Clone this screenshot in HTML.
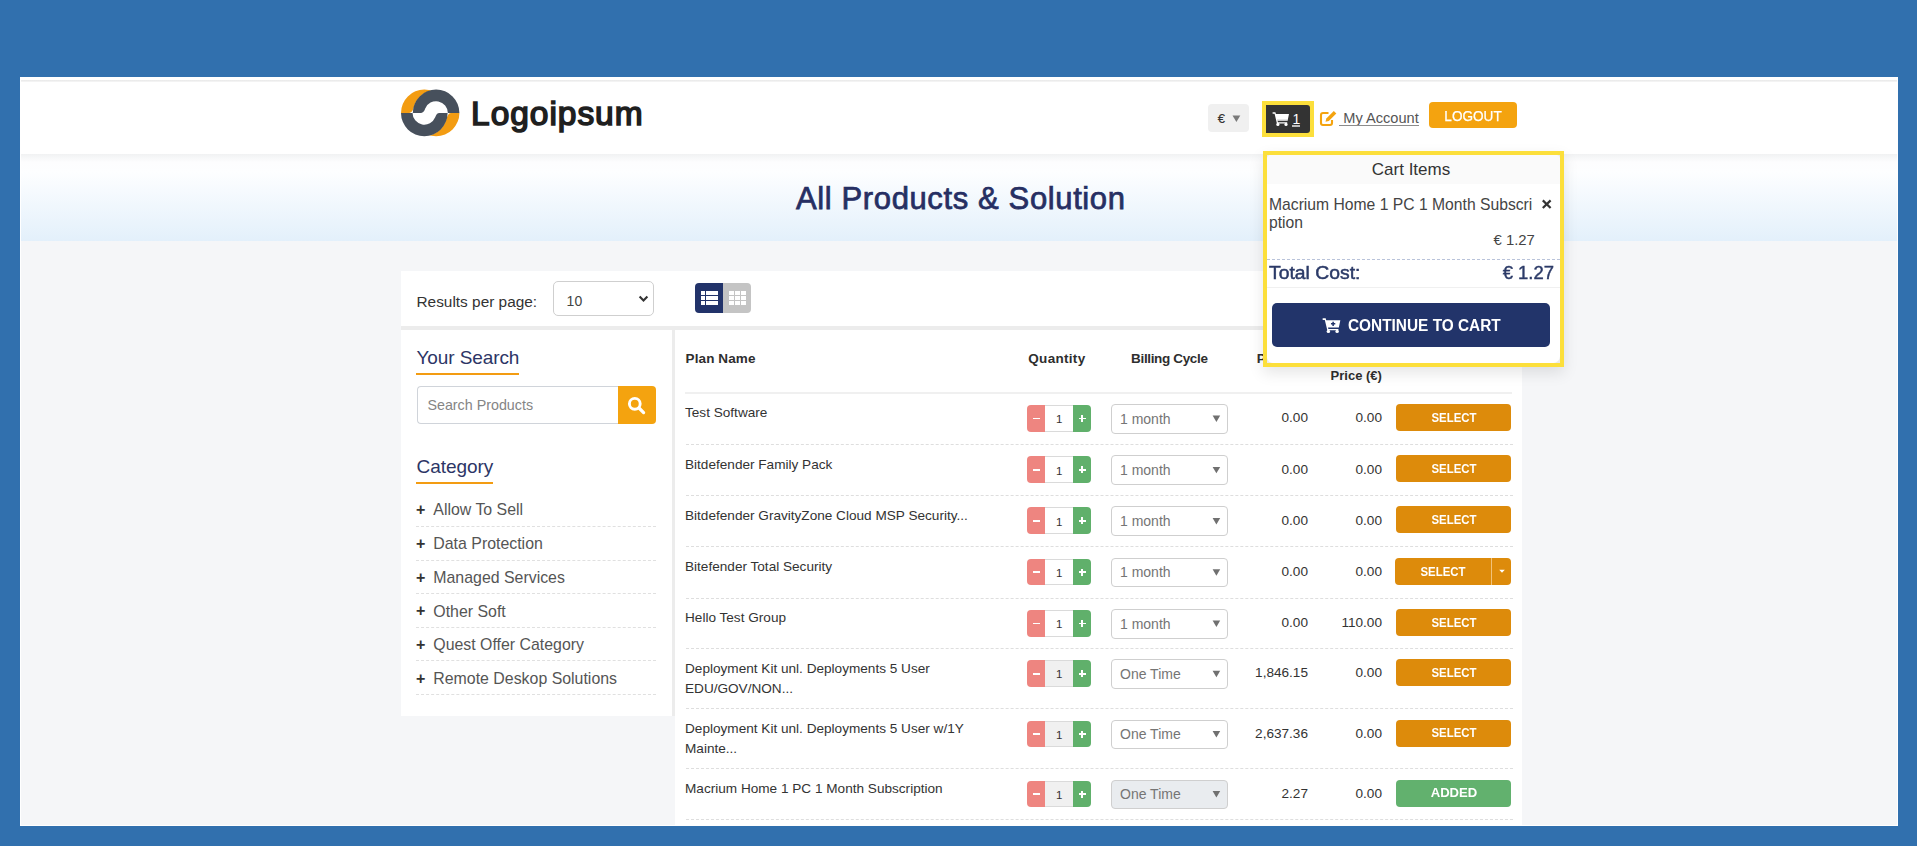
<!DOCTYPE html>
<html><head><meta charset="utf-8">
<style>
*{box-sizing:border-box;margin:0;padding:0}
html,body{width:1917px;height:846px;overflow:hidden;background:#3170ae;font-family:"Liberation Sans",sans-serif;position:relative}
.abs{position:absolute}
.t{position:absolute;white-space:nowrap;line-height:1}
svg{position:absolute;overflow:visible}
</style></head><body>

<div class="abs" style="left:20px;top:77px;width:1878px;height:749px;background:#f5f6f8;border:1px solid #fff"></div>
<div class="abs" style="left:21px;top:77px;width:1876px;height:77px;background:#fff;"></div>
<div class="abs" style="left:21px;top:80px;width:1876px;height:2px;background:linear-gradient(#e8e8e8,#f7f7f7);"></div>
<div class="abs" style="left:21px;top:154px;width:1876px;height:87px;background:linear-gradient(#f1f2f3 0px,#fdfdfe 8px,#fdfeff 18px,#e3f0fb 87px);"></div>
<svg style="left:0;top:0" width="1917" height="846" viewBox="0 0 1917 846"><defs><mask id="mR"><rect x="380" y="80" width="100" height="70" fill="#fff"/><circle cx="436.1" cy="112.9" r="23.0" fill="#000"/></mask><mask id="mL"><rect x="380" y="80" width="100" height="70" fill="#fff"/><circle cx="424.3" cy="112.9" r="23.0" fill="#000"/></mask></defs><path d="M401.0,112.9 A23.3,23.3 0 0 1 447.6,112.9 L436.05,112.9 A11.75,11.75 0 0 0 413.41,108.50 Q411.95,112.9 409.35,112.9 Z" fill="#f39c12" mask="url(#mR)"/><path d="M412.8,112.9 A23.3,23.3 0 0 1 459.40000000000003,112.9 L447.85,112.9 A11.75,11.75 0 0 0 425.21,108.50 Q423.75,112.9 421.15,112.9 Z" fill="#47505c"/><path d="M459.40000000000003,112.9 A23.3,23.3 0 0 1 412.8,112.9 L424.35,112.9 A11.75,11.75 0 0 0 446.99,117.30 Q448.45,112.9 451.05,112.9 Z" fill="#f39c12" mask="url(#mL)"/><path d="M447.6,112.9 A23.3,23.3 0 0 1 401.0,112.9 L412.55,112.9 A11.75,11.75 0 0 0 435.19,117.30 Q436.65,112.9 439.25,112.9 Z" fill="#47505c"/></svg>
<div class="t" style="left:471.10px;top:97.24px;font-size:33.5px;color:#1f1f1f;font-weight:normal;letter-spacing:0.95px;-webkit-text-stroke:1.6px #1f1f1f;">Logoipsum</div>
<div class="abs" style="left:1208px;top:104px;width:41px;height:28px;background:#f0f0f0;border-radius:4px"></div>
<div class="t" style="left:1217.80px;top:112.30px;font-size:13px;color:#333;font-weight:normal;-webkit-text-stroke:0.2px #333;">€</div>
<svg style="left:0;top:0" width="1917" height="846"><polygon points="1232.5,115.5 1240.3,115.5 1236.4,122" fill="#7a7a7a"/></svg>
<div class="abs" style="left:1262px;top:101px;width:52px;height:36px;background:#fcdf3b;"></div>
<div class="abs" style="left:1266px;top:105px;width:44px;height:27.5px;background:#333;border-radius:0 3px 3px 0"></div>
<svg style="left:1272.3px;top:112px" width="17.0" height="14.0" viewBox="0 0 17 14"><path d="M0.6,0.2 H3.4 L3.9,2 H17 L15.6,8.7 H5.6 L5.9,10.2 H15.2 V11.4 H4.9 L2.6,1.8 H0.6 Z" fill="#fff"/><circle cx="5.9" cy="12.4" r="1.6" fill="#fff"/><circle cx="14" cy="12.4" r="1.6" fill="#fff"/><rect x="5" y="7.6" width="10.5" height="0.8" fill="#bbb"/></svg>
<div class="t" style="left:1292.50px;top:112.35px;font-size:14px;color:#fff;font-weight:normal;">1</div>
<div class="abs" style="left:1292px;top:125.2px;width:8px;height:1.7999999999999972px;background:#bdbdbd;"></div>
<svg style="left:1318px;top:109px" width="20" height="18" viewBox="0 0 20 18"><path d="M10.5,4 H5 Q3,4 3,6 V14 Q3,16 5,16 H12 Q14,16 14,14 V11" fill="none" stroke="#f4a30f" stroke-width="2.1"/><path d="M7.5,12.8 L8.3,9.6 L15.8,2.1 L18.3,4.6 L10.8,12.1 Z" fill="#f4a30f"/></svg>
<div class="t" style="left:1343.30px;top:110.64px;font-size:14.6px;color:#555;font-weight:normal;">My Account</div>
<div class="abs" style="left:1339px;top:124.6px;width:80px;height:1.2000000000000028px;background:#8c8c8c;"></div>
<div class="abs" style="left:1429px;top:101.5px;width:88px;height:26.69999999999999px;background:#f4a30f;border-radius:4px"></div>
<div class="t" style="left:1422.80px;width:100px;text-align:center;top:108.50px;font-size:14.3px;color:#fff;font-weight:normal;-webkit-text-stroke:0.25px #fff;transform:scaleX(0.95);transform-origin:center top;">LOGOUT</div>
<div class="t" style="left:710.80px;width:500px;text-align:center;top:182.66px;font-size:31px;color:#262f63;font-weight:normal;letter-spacing:0.62px;-webkit-text-stroke:0.75px #262f63;">All Products &amp; Solution</div>
<div class="abs" style="left:401px;top:271px;width:1121px;height:55px;background:#fff;"></div>
<div class="abs" style="left:401px;top:326px;width:1121px;height:4px;background:#ececec;"></div>
<div class="t" style="left:416.50px;top:293.66px;font-size:15.4px;color:#333;font-weight:normal;">Results per page:</div>
<div class="abs" style="left:553px;top:281px;width:101px;height:35px;background:#fff;border:1px solid #cfcfcf;border-radius:5px"></div>
<div class="t" style="left:566.60px;top:294.35px;font-size:14px;color:#444;font-weight:normal;">10</div>
<svg style="left:0;top:0" width="1917" height="846"><polyline points="639.6,296.6 643.5,300.6 647.4,296.6" fill="none" stroke="#333" stroke-width="2.1"/></svg>
<div class="abs" style="left:695px;top:283px;width:28px;height:30px;background:#22336a;border-radius:4px 0 0 4px"></div>
<div class="abs" style="left:723px;top:283px;width:28px;height:30px;background:#c4c4c4;border-radius:0 4px 4px 0"></div>
<div class="abs" style="left:701px;top:291px;width:3.5px;height:4px;background:#fff;"></div>
<div class="abs" style="left:705.5px;top:291px;width:12.0px;height:4px;background:#fff;"></div>
<div class="abs" style="left:728.5px;top:291px;width:5.0px;height:4px;background:#fff;"></div>
<div class="abs" style="left:734.5px;top:291px;width:5.0px;height:4px;background:#fff;"></div>
<div class="abs" style="left:740.5px;top:291px;width:5.0px;height:4px;background:#fff;"></div>
<div class="abs" style="left:701px;top:296px;width:3.5px;height:4px;background:#fff;"></div>
<div class="abs" style="left:705.5px;top:296px;width:12.0px;height:4px;background:#fff;"></div>
<div class="abs" style="left:728.5px;top:296px;width:5.0px;height:4px;background:#fff;"></div>
<div class="abs" style="left:734.5px;top:296px;width:5.0px;height:4px;background:#fff;"></div>
<div class="abs" style="left:740.5px;top:296px;width:5.0px;height:4px;background:#fff;"></div>
<div class="abs" style="left:701px;top:301px;width:3.5px;height:4px;background:#fff;"></div>
<div class="abs" style="left:705.5px;top:301px;width:12.0px;height:4px;background:#fff;"></div>
<div class="abs" style="left:728.5px;top:301px;width:5.0px;height:4px;background:#fff;"></div>
<div class="abs" style="left:734.5px;top:301px;width:5.0px;height:4px;background:#fff;"></div>
<div class="abs" style="left:740.5px;top:301px;width:5.0px;height:4px;background:#fff;"></div>
<div class="abs" style="left:401px;top:330px;width:271px;height:386px;background:#fff;"></div>
<div class="abs" style="left:672px;top:330px;width:3px;height:386px;background:#ececec;"></div>
<div class="t" style="left:416.50px;top:348.12px;font-size:19px;color:#2c3565;font-weight:normal;letter-spacing:-0.1px;">Your Search</div>
<div class="abs" style="left:416px;top:373.3px;width:103px;height:2.0px;background:#f39c12;"></div>
<div class="abs" style="left:416.5px;top:386px;width:202.5px;height:38px;background:#fff;border:1px solid #d0d4da;border-right:none;border-radius:4px 0 0 4px"></div>
<div class="t" style="left:427.40px;top:398.10px;font-size:14.3px;color:#858585;font-weight:normal;">Search Products</div>
<div class="abs" style="left:618px;top:386px;width:38px;height:38px;background:#f4a30f;border-radius:0 4px 4px 0"></div>
<svg style="left:0;top:0" width="1917" height="846"><circle cx="634.8" cy="403.8" r="5.4" fill="none" stroke="#fff" stroke-width="2.9"/><line x1="639" y1="408" x2="643.6" y2="412.6" stroke="#fff" stroke-width="3.2" stroke-linecap="round"/></svg>
<div class="t" style="left:416.60px;top:456.52px;font-size:19px;color:#2c3565;font-weight:normal;letter-spacing:-0.05px;">Category</div>
<div class="abs" style="left:416px;top:482.2px;width:77px;height:2.0px;background:#f39c12;"></div>
<div class="t" style="left:416.00px;top:502.06px;font-size:16px;color:#333;font-weight:bold;">+</div>
<div class="t" style="left:433.30px;top:502.14px;font-size:15.9px;color:#555;font-weight:normal;">Allow To Sell</div>
<div class="abs" style="left:416px;top:526.0px;width:240px;height:1.0px;background:transparent;border-top:1px dashed #e0e0e0"></div>
<div class="t" style="left:416.00px;top:536.16px;font-size:16px;color:#333;font-weight:bold;">+</div>
<div class="t" style="left:433.30px;top:536.24px;font-size:15.9px;color:#555;font-weight:normal;">Data Protection</div>
<div class="abs" style="left:416px;top:559.5px;width:240px;height:1.0px;background:transparent;border-top:1px dashed #e0e0e0"></div>
<div class="t" style="left:416.00px;top:570.26px;font-size:16px;color:#333;font-weight:bold;">+</div>
<div class="t" style="left:433.30px;top:570.34px;font-size:15.9px;color:#555;font-weight:normal;">Managed Services</div>
<div class="abs" style="left:416px;top:593.0px;width:240px;height:1.0px;background:transparent;border-top:1px dashed #e0e0e0"></div>
<div class="t" style="left:416.00px;top:603.46px;font-size:16px;color:#333;font-weight:bold;">+</div>
<div class="t" style="left:433.30px;top:603.54px;font-size:15.9px;color:#555;font-weight:normal;">Other Soft</div>
<div class="abs" style="left:416px;top:626.5px;width:240px;height:1.0px;background:transparent;border-top:1px dashed #e0e0e0"></div>
<div class="t" style="left:416.00px;top:637.26px;font-size:16px;color:#333;font-weight:bold;">+</div>
<div class="t" style="left:433.30px;top:637.34px;font-size:15.9px;color:#555;font-weight:normal;">Quest Offer Category</div>
<div class="abs" style="left:416px;top:660.0px;width:240px;height:1.0px;background:transparent;border-top:1px dashed #e0e0e0"></div>
<div class="t" style="left:416.00px;top:670.56px;font-size:16px;color:#333;font-weight:bold;">+</div>
<div class="t" style="left:433.30px;top:670.64px;font-size:15.9px;color:#555;font-weight:normal;">Remote Deskop Solutions</div>
<div class="abs" style="left:416px;top:693.5px;width:240px;height:1.0px;background:transparent;border-top:1px dashed #e0e0e0"></div>
<div class="abs" style="left:675px;top:330px;width:847px;height:496px;background:#fff;"></div>
<div class="t" style="left:685.60px;top:352.17px;font-size:13.5px;color:#2e2e2e;font-weight:bold;letter-spacing:0.1px;">Plan Name</div>
<div class="t" style="left:1028.30px;top:352.17px;font-size:13.5px;color:#2e2e2e;font-weight:bold;letter-spacing:0.3px;">Quantity</div>
<div class="t" style="left:1131.10px;top:352.17px;font-size:13.5px;color:#2e2e2e;font-weight:bold;letter-spacing:-0.35px;">Billing Cycle</div>
<div class="t" style="left:1256.70px;top:351.87px;font-size:13.5px;color:#2e2e2e;font-weight:bold;">P</div>
<div class="t" style="left:1261.90px;width:120px;text-align:right;top:368.70px;font-size:13px;color:#2e2e2e;font-weight:bold;">Price (€)</div>
<div class="abs" style="left:685px;top:392.3px;width:827px;height:1.6999999999999886px;background:#f0f0f0;"></div>
<div class="t" style="left:685.00px;top:406.49px;font-size:13.6px;color:#333;font-weight:normal;">Test Software</div>
<div class="abs" style="left:1027px;top:405px;width:18px;height:26.5px;background:#ee8580;border-radius:4px 0 0 4px"></div>
<div class="abs" style="left:1045px;top:405px;width:28px;height:26.5px;background:#fff;border-top:1px solid #dadada;border-bottom:1px solid #dadada"></div>
<div class="abs" style="left:1073px;top:405px;width:18px;height:26.5px;background:#60b06b;border-radius:0 4px 4px 0"></div>
<div class="abs" style="left:1032.5px;top:417.6px;width:7.0px;height:1.7999999999999545px;background:#fff;"></div>
<div class="abs" style="left:1078.5px;top:417.6px;width:7.0px;height:1.7999999999999545px;background:#fff;"></div>
<div class="abs" style="left:1081.1px;top:415px;width:1.800000000000182px;height:7px;background:#fff;"></div>
<div class="t" style="left:1049.30px;width:20px;text-align:center;top:414.27px;font-size:11.5px;color:#333;font-weight:normal;">1</div>
<div class="abs" style="left:1111px;top:404px;width:116.5px;height:29.5px;background:#fff;border:1px solid #cfcfcf;border-radius:4px"></div>
<div class="t" style="left:1120.00px;top:411.75px;font-size:14px;color:#757575;font-weight:normal;">1 month</div>
<svg style="left:0;top:0" width="1917" height="846"><polygon points="1212.6,415.6 1220.2,415.6 1216.4,422" fill="#707070"/></svg>
<div class="t" style="left:1208.00px;width:100px;text-align:right;top:411.29px;font-size:13.6px;color:#333;font-weight:normal;">0.00</div>
<div class="t" style="left:1282.00px;width:100px;text-align:right;top:411.29px;font-size:13.6px;color:#333;font-weight:normal;">0.00</div>
<div class="abs" style="left:1396px;top:404px;width:115px;height:27px;background:#dd8b0b;border-radius:4px"></div>
<div class="t" style="left:1403.50px;width:100px;text-align:center;top:411.80px;font-size:12.4px;color:#fff;font-weight:bold;transform:scaleX(0.92);transform-origin:center top;">SELECT</div>
<div class="abs" style="left:686px;top:443.8px;width:827px;height:1.0px;background:transparent;border-top:1px dashed #dedede"></div>
<div class="t" style="left:685.00px;top:457.79px;font-size:13.6px;color:#333;font-weight:normal;">Bitdefender Family Pack</div>
<div class="abs" style="left:1027px;top:456.3px;width:18px;height:26.5px;background:#ee8580;border-radius:4px 0 0 4px"></div>
<div class="abs" style="left:1045px;top:456.3px;width:28px;height:26.5px;background:#fff;border-top:1px solid #dadada;border-bottom:1px solid #dadada"></div>
<div class="abs" style="left:1073px;top:456.3px;width:18px;height:26.5px;background:#60b06b;border-radius:0 4px 4px 0"></div>
<div class="abs" style="left:1032.5px;top:468.90000000000003px;width:7.0px;height:1.7999999999999545px;background:#fff;"></div>
<div class="abs" style="left:1078.5px;top:468.90000000000003px;width:7.0px;height:1.7999999999999545px;background:#fff;"></div>
<div class="abs" style="left:1081.1px;top:466.3px;width:1.800000000000182px;height:7.0px;background:#fff;"></div>
<div class="t" style="left:1049.30px;width:20px;text-align:center;top:465.57px;font-size:11.5px;color:#333;font-weight:normal;">1</div>
<div class="abs" style="left:1111px;top:455.3px;width:116.5px;height:29.5px;background:#fff;border:1px solid #cfcfcf;border-radius:4px"></div>
<div class="t" style="left:1120.00px;top:463.05px;font-size:14px;color:#757575;font-weight:normal;">1 month</div>
<svg style="left:0;top:0" width="1917" height="846"><polygon points="1212.6,466.90000000000003 1220.2,466.90000000000003 1216.4,473.3" fill="#707070"/></svg>
<div class="t" style="left:1208.00px;width:100px;text-align:right;top:462.59px;font-size:13.6px;color:#333;font-weight:normal;">0.00</div>
<div class="t" style="left:1282.00px;width:100px;text-align:right;top:462.59px;font-size:13.6px;color:#333;font-weight:normal;">0.00</div>
<div class="abs" style="left:1396px;top:455.3px;width:115px;height:27.0px;background:#dd8b0b;border-radius:4px"></div>
<div class="t" style="left:1403.50px;width:100px;text-align:center;top:463.10px;font-size:12.4px;color:#fff;font-weight:bold;transform:scaleX(0.92);transform-origin:center top;">SELECT</div>
<div class="abs" style="left:686px;top:494.9px;width:827px;height:1.0px;background:transparent;border-top:1px dashed #dedede"></div>
<div class="t" style="left:685.00px;top:508.89px;font-size:13.6px;color:#333;font-weight:normal;">Bitdefender GravityZone Cloud MSP Security...</div>
<div class="abs" style="left:1027px;top:507.4px;width:18px;height:26.5px;background:#ee8580;border-radius:4px 0 0 4px"></div>
<div class="abs" style="left:1045px;top:507.4px;width:28px;height:26.5px;background:#fff;border-top:1px solid #dadada;border-bottom:1px solid #dadada"></div>
<div class="abs" style="left:1073px;top:507.4px;width:18px;height:26.5px;background:#60b06b;border-radius:0 4px 4px 0"></div>
<div class="abs" style="left:1032.5px;top:520.0px;width:7.0px;height:1.7999999999999545px;background:#fff;"></div>
<div class="abs" style="left:1078.5px;top:520.0px;width:7.0px;height:1.7999999999999545px;background:#fff;"></div>
<div class="abs" style="left:1081.1px;top:517.4px;width:1.800000000000182px;height:7.0px;background:#fff;"></div>
<div class="t" style="left:1049.30px;width:20px;text-align:center;top:516.67px;font-size:11.5px;color:#333;font-weight:normal;">1</div>
<div class="abs" style="left:1111px;top:506.4px;width:116.5px;height:29.5px;background:#fff;border:1px solid #cfcfcf;border-radius:4px"></div>
<div class="t" style="left:1120.00px;top:514.15px;font-size:14px;color:#757575;font-weight:normal;">1 month</div>
<svg style="left:0;top:0" width="1917" height="846"><polygon points="1212.6,518.0 1220.2,518.0 1216.4,524.4" fill="#707070"/></svg>
<div class="t" style="left:1208.00px;width:100px;text-align:right;top:513.69px;font-size:13.6px;color:#333;font-weight:normal;">0.00</div>
<div class="t" style="left:1282.00px;width:100px;text-align:right;top:513.69px;font-size:13.6px;color:#333;font-weight:normal;">0.00</div>
<div class="abs" style="left:1396px;top:506.4px;width:115px;height:27.0px;background:#dd8b0b;border-radius:4px"></div>
<div class="t" style="left:1403.50px;width:100px;text-align:center;top:514.20px;font-size:12.4px;color:#fff;font-weight:bold;transform:scaleX(0.92);transform-origin:center top;">SELECT</div>
<div class="abs" style="left:686px;top:546.2px;width:827px;height:1.0px;background:transparent;border-top:1px dashed #dedede"></div>
<div class="t" style="left:685.00px;top:560.19px;font-size:13.6px;color:#333;font-weight:normal;">Bitefender Total Security</div>
<div class="abs" style="left:1027px;top:558.7px;width:18px;height:26.5px;background:#ee8580;border-radius:4px 0 0 4px"></div>
<div class="abs" style="left:1045px;top:558.7px;width:28px;height:26.5px;background:#fff;border-top:1px solid #dadada;border-bottom:1px solid #dadada"></div>
<div class="abs" style="left:1073px;top:558.7px;width:18px;height:26.5px;background:#60b06b;border-radius:0 4px 4px 0"></div>
<div class="abs" style="left:1032.5px;top:571.3000000000001px;width:7.0px;height:1.7999999999999545px;background:#fff;"></div>
<div class="abs" style="left:1078.5px;top:571.3000000000001px;width:7.0px;height:1.7999999999999545px;background:#fff;"></div>
<div class="abs" style="left:1081.1px;top:568.7px;width:1.800000000000182px;height:7.0px;background:#fff;"></div>
<div class="t" style="left:1049.30px;width:20px;text-align:center;top:567.97px;font-size:11.5px;color:#333;font-weight:normal;">1</div>
<div class="abs" style="left:1111px;top:557.7px;width:116.5px;height:29.5px;background:#fff;border:1px solid #cfcfcf;border-radius:4px"></div>
<div class="t" style="left:1120.00px;top:565.45px;font-size:14px;color:#757575;font-weight:normal;">1 month</div>
<svg style="left:0;top:0" width="1917" height="846"><polygon points="1212.6,569.3000000000001 1220.2,569.3000000000001 1216.4,575.7" fill="#707070"/></svg>
<div class="t" style="left:1208.00px;width:100px;text-align:right;top:564.99px;font-size:13.6px;color:#333;font-weight:normal;">0.00</div>
<div class="t" style="left:1282.00px;width:100px;text-align:right;top:564.99px;font-size:13.6px;color:#333;font-weight:normal;">0.00</div>
<div class="abs" style="left:1395px;top:557.7px;width:116px;height:27.0px;background:#dd8b0b;border-radius:4px"></div>
<div class="abs" style="left:1491px;top:557.7px;width:1px;height:27.0px;background:#f2c27a;"></div>
<div class="t" style="left:1393.40px;width:100px;text-align:center;top:565.50px;font-size:12.4px;color:#fff;font-weight:bold;transform:scaleX(0.92);transform-origin:center top;">SELECT</div>
<svg style="left:0;top:0" width="1917" height="846"><polygon points="1499.2,569.7 1504.8,569.7 1502,572.7" fill="#fff"/></svg>
<div class="abs" style="left:686px;top:597.5px;width:827px;height:1.0px;background:transparent;border-top:1px dashed #dedede"></div>
<div class="t" style="left:685.00px;top:611.49px;font-size:13.6px;color:#333;font-weight:normal;">Hello Test Group</div>
<div class="abs" style="left:1027px;top:610px;width:18px;height:26.5px;background:#ee8580;border-radius:4px 0 0 4px"></div>
<div class="abs" style="left:1045px;top:610px;width:28px;height:26.5px;background:#fff;border-top:1px solid #dadada;border-bottom:1px solid #dadada"></div>
<div class="abs" style="left:1073px;top:610px;width:18px;height:26.5px;background:#60b06b;border-radius:0 4px 4px 0"></div>
<div class="abs" style="left:1032.5px;top:622.6px;width:7.0px;height:1.7999999999999545px;background:#fff;"></div>
<div class="abs" style="left:1078.5px;top:622.6px;width:7.0px;height:1.7999999999999545px;background:#fff;"></div>
<div class="abs" style="left:1081.1px;top:620px;width:1.800000000000182px;height:7px;background:#fff;"></div>
<div class="t" style="left:1049.30px;width:20px;text-align:center;top:619.27px;font-size:11.5px;color:#333;font-weight:normal;">1</div>
<div class="abs" style="left:1111px;top:609px;width:116.5px;height:29.5px;background:#fff;border:1px solid #cfcfcf;border-radius:4px"></div>
<div class="t" style="left:1120.00px;top:616.75px;font-size:14px;color:#757575;font-weight:normal;">1 month</div>
<svg style="left:0;top:0" width="1917" height="846"><polygon points="1212.6,620.6 1220.2,620.6 1216.4,627" fill="#707070"/></svg>
<div class="t" style="left:1208.00px;width:100px;text-align:right;top:616.29px;font-size:13.6px;color:#333;font-weight:normal;">0.00</div>
<div class="t" style="left:1282.00px;width:100px;text-align:right;top:616.29px;font-size:13.6px;color:#333;font-weight:normal;">110.00</div>
<div class="abs" style="left:1396px;top:609px;width:115px;height:27px;background:#dd8b0b;border-radius:4px"></div>
<div class="t" style="left:1403.50px;width:100px;text-align:center;top:616.80px;font-size:12.4px;color:#fff;font-weight:bold;transform:scaleX(0.92);transform-origin:center top;">SELECT</div>
<div class="abs" style="left:686px;top:647.7px;width:827px;height:1.0px;background:transparent;border-top:1px dashed #dedede"></div>
<div class="t" style="left:685.00px;top:661.69px;font-size:13.6px;color:#333;font-weight:normal;">Deployment Kit unl. Deployments 5 User</div>
<div class="t" style="left:685.00px;top:681.69px;font-size:13.6px;color:#333;font-weight:normal;">EDU/GOV/NON...</div>
<div class="abs" style="left:1027px;top:660.2px;width:18px;height:26.5px;background:#ee8580;border-radius:4px 0 0 4px"></div>
<div class="abs" style="left:1045px;top:660.2px;width:28px;height:26.5px;background:#f0f0f0;border-top:1px solid #dadada;border-bottom:1px solid #dadada"></div>
<div class="abs" style="left:1073px;top:660.2px;width:18px;height:26.5px;background:#60b06b;border-radius:0 4px 4px 0"></div>
<div class="abs" style="left:1032.5px;top:672.8000000000001px;width:7.0px;height:1.7999999999999545px;background:#fff;"></div>
<div class="abs" style="left:1078.5px;top:672.8000000000001px;width:7.0px;height:1.7999999999999545px;background:#fff;"></div>
<div class="abs" style="left:1081.1px;top:670.2px;width:1.800000000000182px;height:7.0px;background:#fff;"></div>
<div class="t" style="left:1049.30px;width:20px;text-align:center;top:669.47px;font-size:11.5px;color:#333;font-weight:normal;">1</div>
<div class="abs" style="left:1111px;top:659.2px;width:116.5px;height:29.5px;background:#fff;border:1px solid #cfcfcf;border-radius:4px"></div>
<div class="t" style="left:1120.00px;top:666.95px;font-size:14px;color:#757575;font-weight:normal;">One Time</div>
<svg style="left:0;top:0" width="1917" height="846"><polygon points="1212.6,670.8000000000001 1220.2,670.8000000000001 1216.4,677.2" fill="#707070"/></svg>
<div class="t" style="left:1208.00px;width:100px;text-align:right;top:666.49px;font-size:13.6px;color:#333;font-weight:normal;">1,846.15</div>
<div class="t" style="left:1282.00px;width:100px;text-align:right;top:666.49px;font-size:13.6px;color:#333;font-weight:normal;">0.00</div>
<div class="abs" style="left:1396px;top:659.2px;width:115px;height:27.0px;background:#dd8b0b;border-radius:4px"></div>
<div class="t" style="left:1403.50px;width:100px;text-align:center;top:667.00px;font-size:12.4px;color:#fff;font-weight:bold;transform:scaleX(0.92);transform-origin:center top;">SELECT</div>
<div class="abs" style="left:686px;top:708.0px;width:827px;height:1.0px;background:transparent;border-top:1px dashed #dedede"></div>
<div class="t" style="left:685.00px;top:721.99px;font-size:13.6px;color:#333;font-weight:normal;">Deployment Kit unl. Deployments 5 User w/1Y</div>
<div class="t" style="left:685.00px;top:741.99px;font-size:13.6px;color:#333;font-weight:normal;">Mainte...</div>
<div class="abs" style="left:1027px;top:720.5px;width:18px;height:26.5px;background:#ee8580;border-radius:4px 0 0 4px"></div>
<div class="abs" style="left:1045px;top:720.5px;width:28px;height:26.5px;background:#f0f0f0;border-top:1px solid #dadada;border-bottom:1px solid #dadada"></div>
<div class="abs" style="left:1073px;top:720.5px;width:18px;height:26.5px;background:#60b06b;border-radius:0 4px 4px 0"></div>
<div class="abs" style="left:1032.5px;top:733.1px;width:7.0px;height:1.7999999999999545px;background:#fff;"></div>
<div class="abs" style="left:1078.5px;top:733.1px;width:7.0px;height:1.7999999999999545px;background:#fff;"></div>
<div class="abs" style="left:1081.1px;top:730.5px;width:1.800000000000182px;height:7.0px;background:#fff;"></div>
<div class="t" style="left:1049.30px;width:20px;text-align:center;top:729.77px;font-size:11.5px;color:#333;font-weight:normal;">1</div>
<div class="abs" style="left:1111px;top:719.5px;width:116.5px;height:29.5px;background:#fff;border:1px solid #cfcfcf;border-radius:4px"></div>
<div class="t" style="left:1120.00px;top:727.25px;font-size:14px;color:#757575;font-weight:normal;">One Time</div>
<svg style="left:0;top:0" width="1917" height="846"><polygon points="1212.6,731.1 1220.2,731.1 1216.4,737.5" fill="#707070"/></svg>
<div class="t" style="left:1208.00px;width:100px;text-align:right;top:726.79px;font-size:13.6px;color:#333;font-weight:normal;">2,637.36</div>
<div class="t" style="left:1282.00px;width:100px;text-align:right;top:726.79px;font-size:13.6px;color:#333;font-weight:normal;">0.00</div>
<div class="abs" style="left:1396px;top:719.5px;width:115px;height:27.0px;background:#dd8b0b;border-radius:4px"></div>
<div class="t" style="left:1403.50px;width:100px;text-align:center;top:727.30px;font-size:12.4px;color:#fff;font-weight:bold;transform:scaleX(0.92);transform-origin:center top;">SELECT</div>
<div class="abs" style="left:686px;top:768.0px;width:827px;height:1.0px;background:transparent;border-top:1px dashed #dedede"></div>
<div class="t" style="left:685.00px;top:781.99px;font-size:13.6px;color:#333;font-weight:normal;">Macrium Home 1 PC 1 Month Subscription</div>
<div class="abs" style="left:1027px;top:780.5px;width:18px;height:26.5px;background:#ee8580;border-radius:4px 0 0 4px"></div>
<div class="abs" style="left:1045px;top:780.5px;width:28px;height:26.5px;background:#f0f0f0;border-top:1px solid #dadada;border-bottom:1px solid #dadada"></div>
<div class="abs" style="left:1073px;top:780.5px;width:18px;height:26.5px;background:#60b06b;border-radius:0 4px 4px 0"></div>
<div class="abs" style="left:1032.5px;top:793.1px;width:7.0px;height:1.7999999999999545px;background:#fff;"></div>
<div class="abs" style="left:1078.5px;top:793.1px;width:7.0px;height:1.7999999999999545px;background:#fff;"></div>
<div class="abs" style="left:1081.1px;top:790.5px;width:1.800000000000182px;height:7.0px;background:#fff;"></div>
<div class="t" style="left:1049.30px;width:20px;text-align:center;top:789.77px;font-size:11.5px;color:#333;font-weight:normal;">1</div>
<div class="abs" style="left:1111px;top:779.5px;width:116.5px;height:29.5px;background:#e9ecef;border:1px solid #cfcfcf;border-radius:4px"></div>
<div class="t" style="left:1120.00px;top:787.25px;font-size:14px;color:#757575;font-weight:normal;">One Time</div>
<svg style="left:0;top:0" width="1917" height="846"><polygon points="1212.6,791.1 1220.2,791.1 1216.4,797.5" fill="#707070"/></svg>
<div class="t" style="left:1208.00px;width:100px;text-align:right;top:786.79px;font-size:13.6px;color:#333;font-weight:normal;">2.27</div>
<div class="t" style="left:1282.00px;width:100px;text-align:right;top:786.79px;font-size:13.6px;color:#333;font-weight:normal;">0.00</div>
<div class="abs" style="left:1396px;top:779.5px;width:115px;height:27.0px;background:#62b16e;border-radius:4px"></div>
<div class="t" style="left:1403.50px;width:100px;text-align:center;top:787.30px;font-size:12.4px;color:#fff;font-weight:bold;transform:scaleX(1.06);transform-origin:center top;">ADDED</div>
<div class="abs" style="left:686px;top:818.7px;width:827px;height:1.0px;background:transparent;border-top:1px dashed #dedede"></div>
<div class="abs" style="left:1263px;top:151px;width:301px;height:216px;background:#ebebeb;border:4px solid #fcdf3b;box-shadow:0 6px 14px rgba(0,0,0,0.10)"></div>
<div class="abs" style="left:1267px;top:155px;width:293px;height:208px;background:#fff;border-radius:5px 6px 7px 6px"></div>
<div class="abs" style="left:1267px;top:155px;width:293px;height:29px;background:#fafafa;border-radius:4px 4px 0 0"></div>
<div class="t" style="left:1311.00px;width:200px;text-align:center;top:161.21px;font-size:17px;color:#333;font-weight:normal;">Cart Items</div>
<div class="t" style="left:1269.00px;top:196.61px;font-size:15.7px;color:#444;font-weight:normal;">Macrium Home 1 PC 1 Month Subscri</div>
<div class="t" style="left:1269.00px;top:214.51px;font-size:15.7px;color:#444;font-weight:normal;">ption</div>
<svg style="left:0;top:0" width="1917" height="846"><path d="M1542.8,200.4 L1550.6,208 M1550.6,200.4 L1542.8,208" stroke="#333" stroke-width="2.2"/></svg>
<div class="t" style="left:1434.90px;width:100px;text-align:right;top:232.59px;font-size:14.9px;color:#444;font-weight:normal;">€ 1.27</div>
<div class="abs" style="left:1267px;top:258.5px;width:293px;height:1.0px;background:transparent;border-top:1px dashed #b9c3da"></div>
<div class="t" style="left:1269.00px;top:265.00px;font-size:17.6px;color:#2b3a67;font-weight:normal;-webkit-text-stroke:0.45px #2b3a67;transform:scaleX(1.1);transform-origin:left top;">Total Cost:</div>
<div class="t" style="left:1453.80px;width:100px;text-align:right;top:265.00px;font-size:17.6px;color:#2b3a67;font-weight:normal;-webkit-text-stroke:0.4px #2b3a67;transform:scaleX(1.05);transform-origin:right top;">€ 1.27</div>
<div class="abs" style="left:1267px;top:287px;width:293px;height:1px;background:#f0f0f0;"></div>
<div class="abs" style="left:1272px;top:303px;width:278px;height:44px;background:#22346a;border-radius:5px"></div>
<svg style="left:1322px;top:317.5px" width="18.36" height="15.120000000000001" viewBox="0 0 17 14"><path d="M0.6,0.2 H3.4 L3.9,2 H17 L15.6,8.7 H5.6 L5.9,10.2 H15.2 V11.4 H4.9 L2.6,1.8 H0.6 Z" fill="#fff"/><circle cx="5.9" cy="12.4" r="1.6" fill="#fff"/><circle cx="14" cy="12.4" r="1.6" fill="#fff"/><path d="M10.3,3.4 V7.4 M8.3,5.4 H12.3" stroke="#22346a" stroke-width="1.4"/></svg>
<div class="t" style="left:1347.80px;top:318.18px;font-size:16.8px;color:#fff;font-weight:bold;transform:scaleX(0.917);transform-origin:left top;">CONTINUE TO CART</div>
</body></html>
